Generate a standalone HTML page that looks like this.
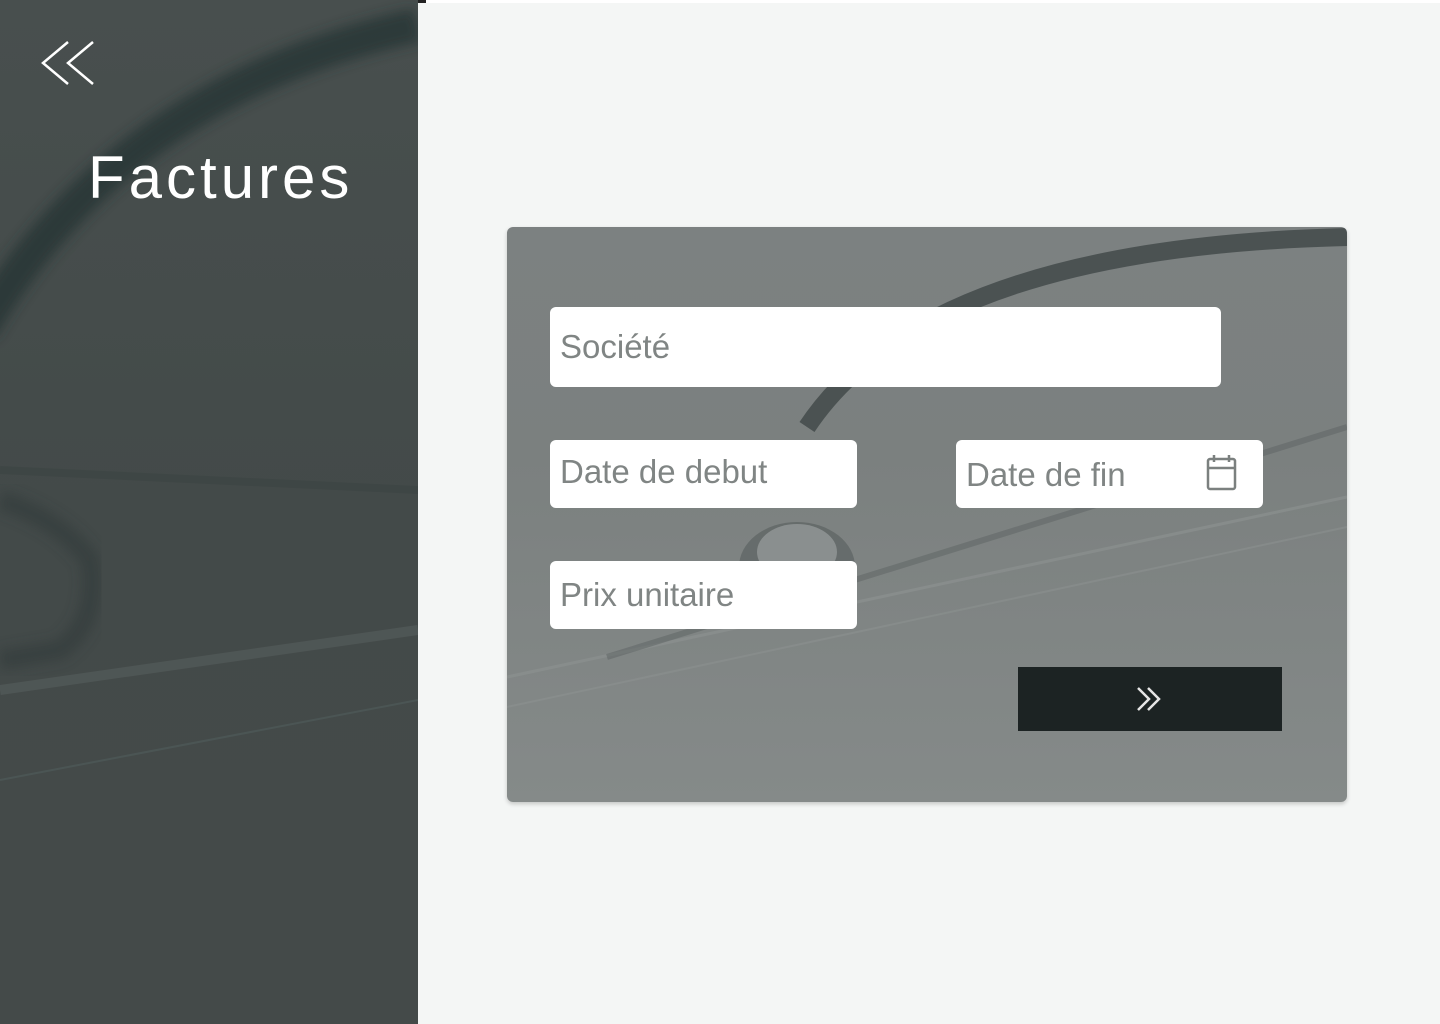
<!DOCTYPE html>
<html><head><meta charset="utf-8"><style>
html,body{margin:0;padding:0;width:1440px;height:1024px;overflow:hidden;background:#f4f6f5;font-family:"Liberation Sans",sans-serif;}
.left{position:absolute;left:0;top:0;width:418px;height:1024px;background:linear-gradient(180deg,#484f4e 0%,#434a49 50%,#444a49 100%);overflow:hidden}
.topbar{position:absolute;left:418px;top:0;width:1022px;height:3px;background:#fff}
.topmark{position:absolute;left:418px;top:0;width:8px;height:3px;background:#222}
h1{position:absolute;left:88px;top:143px;margin:0;color:#fff;font-weight:400;font-size:60px;letter-spacing:4px}
.card{position:absolute;left:507px;top:227px;width:840px;height:575px;border-radius:6px;background:linear-gradient(180deg,#7c8181 0%,#7b807f 40%,#858a89 100%);box-shadow:0 2px 4px rgba(0,0,0,.2);overflow:hidden}
.inp{position:absolute;background:#fff;border-radius:6px;color:#808584;font-size:33px;box-sizing:border-box;padding-left:10px;line-height:1}
.btn{position:absolute;left:1018px;top:667px;width:264px;height:64px;background:#1c2323}
</style></head><body>
<div class="left">
<svg width="418" height="1024" style="position:absolute;left:0;top:0">
<defs><filter id="b"><feGaussianBlur stdDeviation="6"/></filter></defs>
<path d="M-20 330 Q120 90 418 25" stroke="#243031" stroke-width="34" fill="none" opacity=".7" filter="url(#b)"/>
<path d="M0 500 Q60 520 90 560 Q100 620 60 650 L0 660" stroke="#2f3737" stroke-width="20" fill="none" opacity=".5" filter="url(#b)"/>
<path d="M0 690 L418 630" stroke="#5a6261" stroke-width="10" opacity=".5"/>
<path d="M0 780 L418 700" stroke="#536160" stroke-width="2" opacity=".5"/>
<path d="M0 470 L418 490" stroke="#3b4342" stroke-width="8" opacity=".5"/>
</svg>
<svg width="60" height="50" style="position:absolute;left:38px;top:38px" fill="none" stroke="#fff" stroke-width="2.5">
<path d="M30 4 L5 25 L30 46"/><path d="M55 4 L30 25 L55 46"/>
</svg>
<h1>Factures</h1>
</div>
<div class="topbar"></div><div class="topmark"></div>
<div class="card">
<svg width="840" height="575" style="position:absolute;left:0;top:0">
<path d="M300 200 Q420 20 840 10" stroke="#2c3434" stroke-width="18" fill="none" opacity=".6"/>
<path d="M0 450 L840 270" stroke="#8e9392" stroke-width="3" opacity=".6"/>
<path d="M0 480 L840 300" stroke="#8e9392" stroke-width="2" opacity=".5"/>
<path d="M100 430 L840 200" stroke="#5e6464" stroke-width="6" opacity=".5"/>
<ellipse cx="290" cy="340" rx="58" ry="45" fill="#5c6262" opacity=".7"/>
<ellipse cx="290" cy="325" rx="40" ry="28" fill="#8a8f8f"/>
</svg>
</div>
<div class="inp" style="left:550px;top:307px;width:671px;height:80px;padding-top:23px">Société</div>
<div class="inp" style="left:550px;top:440px;width:307px;height:68px;padding-top:15px">Date de debut</div>
<div class="inp" style="left:956px;top:440px;width:307px;height:68px;padding-top:18px">Date de fin
<svg width="32" height="38" style="position:absolute;left:250px;top:14px" fill="none" stroke="#7b807f" stroke-width="2.5"><rect x="2" y="5" width="27" height="30" rx="2"/><path d="M2 14 H29 M8 1 V8 M23 1 V8"/></svg></div>
<div class="inp" style="left:550px;top:561px;width:307px;height:68px;padding-top:17px">Prix unitaire</div>
<div class="btn"><svg width="30" height="30" style="position:absolute;left:117px;top:17px" fill="none" stroke="#e6e6e6" stroke-width="2.5"><path d="M3 4 L14 15 L3 26 M13 4 L24 15 L13 26"/></svg></div>
</body></html>
